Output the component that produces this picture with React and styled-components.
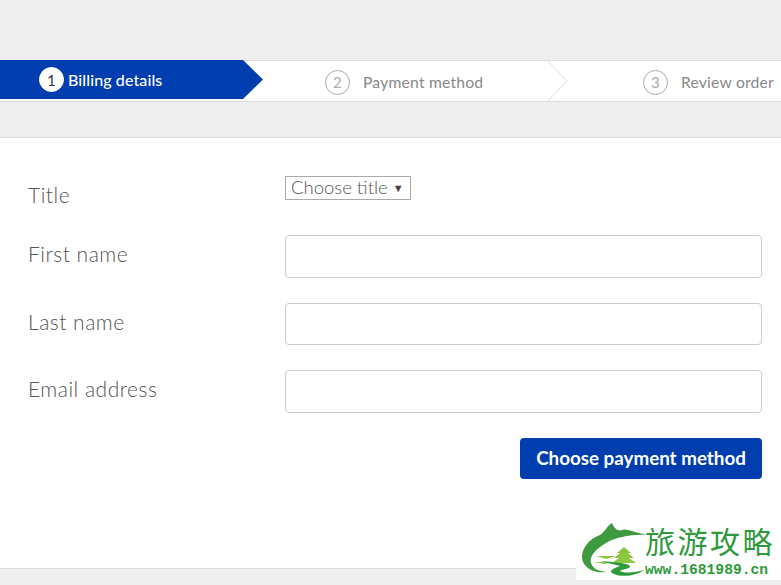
import styled, { createGlobalStyle } from "styled-components";

const GlobalStyle = createGlobalStyle`
  html, body {
    margin: 0;
    padding: 0;
    background: #eeeeee;
  }
  * {
    box-sizing: border-box;
  }
`;

const Page = styled.div`
  position: relative;
  width: 781px;
  height: 585px;
  padding-top: 60px;
  overflow: hidden;
  font-family: "Lato", "Open Sans", sans-serif;
  color: #666;
`;

const Stepper = styled.div`
  display: flex;
  height: 42px;
  background: #fff;
  border-top: 1px solid #ddd;
  border-bottom: 1px solid #ddd;
`;

const Step = styled.div`
  position: relative;
  display: flex;
  align-items: center;
  flex: none;
  width: ${(p) => p.$width}px;
  padding-top: 2px;
  padding-left: ${(p) => p.$pad}px;
  gap: ${(p) => p.$gap}px;
  font-size: 15.7px;
  letter-spacing: 0.2px;
  color: #888;
`;

const ActiveStep = styled.div`
  display: flex;
  align-items: center;
  flex: none;
  width: 263px;
  height: 39px;
  margin-top: -1px;
  padding: 0 0 0 39px;
  gap: 4px;
  background: #003eaf;
  clip-path: polygon(0 0, 243px 0, 263px 50%, 243px 100%, 0 100%);
  color: #fff;
  font-size: 16px;
  font-weight: 500;
  letter-spacing: 0.1px;
`;

const Num = styled.span`
  display: flex;
  align-items: center;
  justify-content: center;
  flex: none;
  width: 25px;
  height: 25px;
  border-radius: 50%;
  font-size: 15px;
  font-weight: 400;
  background: ${(p) => (p.$active ? "#fff" : "transparent")};
  color: ${(p) => (p.$active ? "#335" : "#aaa")};
  border: 1px solid ${(p) => (p.$active ? "#fff" : "#aaa")};
`;

const Chevron = styled.svg`
  position: absolute;
  top: -1px;
  right: 0;
`;

const Panel = styled.div`
  height: 432px;
  margin-top: 35px;
  padding: 38px 19px 0 28px;
  background: #fff;
  border-top: 1px solid #ddd;
  border-bottom: 1px solid #ddd;
`;

const Row = styled.div`
  display: flex;
  align-items: flex-start;
  height: ${(p) => (p.$short ? "34px" : "42.67px")};
  margin-bottom: 25px;
`;

const Label = styled.label`
  flex: none;
  width: 257px;
  line-height: 38px;
  font-size: 21px;
  font-weight: 300;
  letter-spacing: 0.5px;
  color: #555;
`;

const Select = styled.div`
  display: flex;
  align-items: center;
  gap: 5px;
  height: 24px;
  padding: 0 6px 2px 5px;
  border: 1px solid #aaa;
  font-size: 18.5px;
  font-weight: 300;
  color: #555;
`;

const Caret = styled.span`
  font-size: 11px;
  color: #444;
`;

const Input = styled.input`
  flex: 1;
  height: 42.67px;
  background: #fff;
  border: 1px solid #ccc;
  border-radius: 4px;
`;

const Actions = styled.div`
  display: flex;
  justify-content: flex-end;
`;

const Button = styled.button`
  width: 242px;
  height: 41px;
  padding: 0 0 2px;
  background: #003eaf;
  border: 0;
  border-radius: 4px;
  color: #fff;
  font-family: inherit;
  font-size: 18.8px;
  font-weight: 700;
`;

const Watermark = styled.div`
  position: absolute;
  left: 576px;
  top: 522px;
  width: 205px;
  height: 58px;
  background: rgba(255, 255, 255, 0.92);
  display: flex;
  align-items: flex-start;
`;

const LogoText = styled.div`
  display: flex;
  flex-direction: column;
  flex: none;
  margin-left: -3px;
`;

const LogoTitle = styled.div`
  font-family: "Noto Sans CJK SC", sans-serif;
  font-size: 30px;
  line-height: 43px;
  margin-top: -3px;
  letter-spacing: 2.5px;
  white-space: nowrap;
  color: #2f9a3c;
`;

const LogoUrl = styled.div`
  font-family: "Liberation Mono", monospace;
  font-size: 14.67px;
  line-height: 17px;
  font-weight: 700;
  color: #2f9a3c;
  white-space: nowrap;
`;

function Logo() {
  return (
    <svg width="72" height="58" viewBox="0 0 72 58" style={{ flex: "none" }}>
      <path
        d="M6 33C8 22 16 16 24 13C28 11 31 4 36 1C38 6 42 10 46 8C50 6 56 10 72 13C56 12 40 15 30 21C20 27 13 34 15 41C17 47 22 49 30 50C18 52 5 45 6 33Z"
        fill="#3d9a3e"
      />
      <path d="M48 25L55 31H52L58 36H53L60 41H36L43 36H38L44 31H41Z" fill="#8dc63f" />
      <path d="M20 34H40L30 37ZM18 40H36L28 42Z" fill="#8dc63f" />
      <path
        d="M24 39C36 40 52 41 54 44C55 47 46 47 44 49C50 52 60 50 68 48C60 54 44 56 36 51C32 48 42 45 44 44C38 42 30 41 24 39Z"
        fill="#2f9a3c"
      />
    </svg>
  );
}

export default function App() {
  return (
    <Page>
      <GlobalStyle />
      <Stepper>
        <ActiveStep>
          <Num $active>1</Num>
          Billing details
        </ActiveStep>
        <Step $width={305} $pad={62} $gap={13}>
          <Num>2</Num>
          Payment method
          <Chevron width="21" height="42" viewBox="0 0 21 42" fill="none">
            <path d="M0 0L20 21L0 42" stroke="#ddd" />
          </Chevron>
        </Step>
        <Step $width={213} $pad={75} $gap={13}>
          <Num>3</Num>
          Review order
        </Step>
      </Stepper>
      <Panel>
        <Row $short>
          <Label>Title</Label>
          <Select>
            Choose title <Caret>▼</Caret>
          </Select>
        </Row>
        <Row>
          <Label>First name</Label>
          <Input />
        </Row>
        <Row>
          <Label>Last name</Label>
          <Input />
        </Row>
        <Row>
          <Label>Email address</Label>
          <Input />
        </Row>
        <Actions>
          <Button>Choose payment method</Button>
        </Actions>
      </Panel>
      <Watermark>
        <Logo />
        <LogoText>
          <LogoTitle>旅游攻略</LogoTitle>
          <LogoUrl>www.1681989.cn</LogoUrl>
        </LogoText>
      </Watermark>
    </Page>
  );
}
